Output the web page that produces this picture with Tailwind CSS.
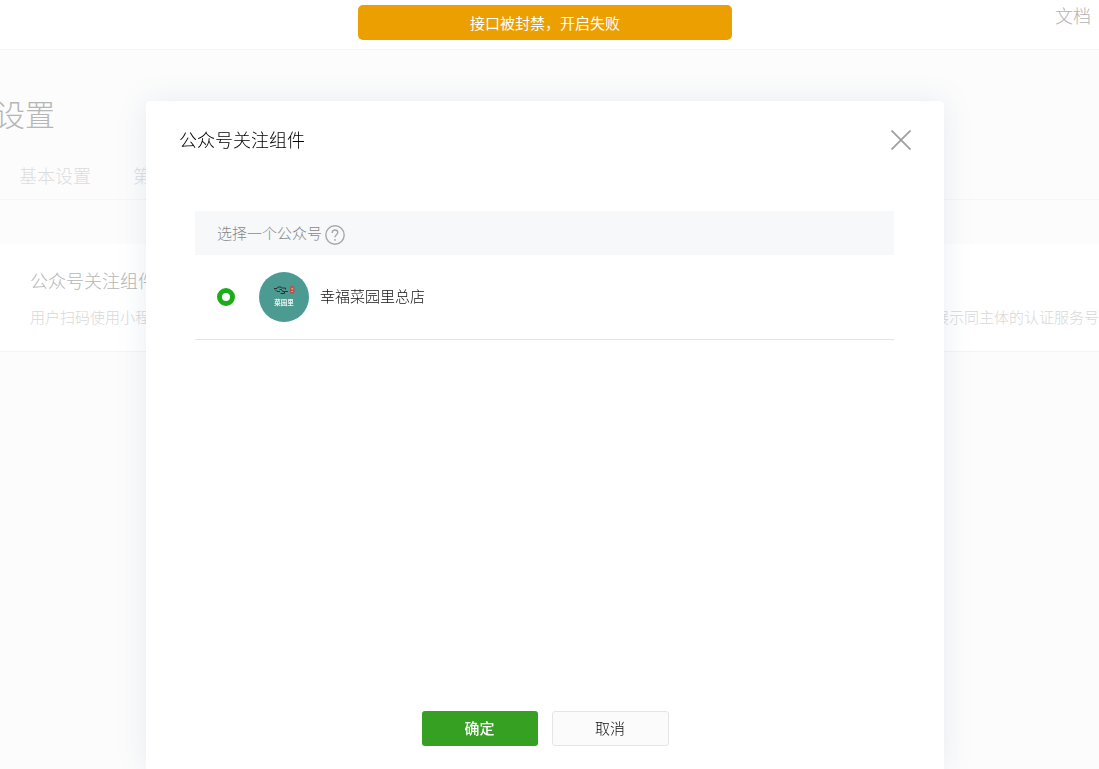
<!DOCTYPE html>
<html lang="zh-CN">
<head>
    <meta charset="UTF-8">
    <meta name="viewport" content="width=device-width, initial-scale=1.0">
    <title>设置</title>
    <script src="https://cdn.jsdelivr.net/npm/@tailwindcss/browser@4"></script>
</head>
<body class="min-h-screen overflow-hidden bg-[#fcfcfc] font-['Noto_Sans_CJK_SC',sans-serif] text-[15px] leading-6 font-light">
    <!-- Page behind the dialog -->
    <header class="flex h-[50px] justify-end border-b border-[#f5f5f5] bg-white px-2 pt-[3px]">
        <a href="#" class="text-lg leading-6 text-[#b4b4b4]">文档</a>
    </header>

    <main>
        <h1 class="-ml-[5px] pt-[43px] text-[30px] leading-10 text-[#b6b6b6]">设置</h1>
        <nav class="mt-[30px] flex h-[37px] gap-[42px] border-b border-[#f5f5f5] pl-[19px] text-lg leading-6 text-[#dcdcdc]">
            <a href="#">基本设置</a>
            <a href="#">第三方设置</a>
        </nav>

        <section class="mt-11 border-b border-[#f4f4f4] bg-white pt-6 pb-[22px] pl-[30px]">
            <h2 class="text-lg leading-6 text-[#b6b6b6]">公众号关注组件</h2>
            <p class="mt-[13px] flex justify-between whitespace-nowrap text-[#d8d8d8]">
                <span>用户扫码使用小程序时</span>
                <span>可展示同主体的认证服务号</span>
            </p>
        </section>
    </main>

    <!-- Dialog -->
    <div class="fixed inset-0 flex justify-center pt-[101px] pr-[9px]">
        <div role="dialog" aria-labelledby="dialogTitle" class="flex w-full max-w-[798px] flex-col rounded-t bg-white shadow-[0_1px_30px_rgba(95,125,165,0.14)]">
            <div class="flex h-[78px] items-center justify-between px-[33px]">
                <h3 id="dialogTitle" class="pb-0.5 text-lg leading-6 text-black">公众号关注组件</h3>
                <button type="button" aria-label="关闭">
                    <svg class="h-5 w-5" viewBox="0 0 20 20" fill="none" stroke="#a0a0a0" stroke-width="1.8">
                        <path d="M.5.5l19 19M19.5.5l-19 19"/>
                    </svg>
                </button>
            </div>

            <div class="flex-1 pt-8 pr-[50px] pl-[49px]">
                <table class="w-full">
                    <thead>
                        <tr class="h-11 bg-[#f6f8f9]">
                            <th class="pl-[22px] text-left font-light text-[#888]">
                                <div class="flex items-center">
                                    选择一个公众号
                                    <svg class="mt-1 ml-[3px] h-5 w-5" viewBox="0 0 20 20" fill="none" stroke="#a8a8a8" stroke-width="1.4">
                                        <circle cx="10" cy="10" r="9.2"/>
                                        <path d="M7.2 7.9c0-1.8 1.1-2.9 2.8-2.9s2.8 1 2.8 2.5c0 2.1-2.8 2.3-2.8 4.7" stroke-width="1.4"/>
                                        <circle cx="10" cy="14.9" r=".9" fill="#a8a8a8" stroke="none"/>
                                    </svg>
                                </div>
                            </th>
                        </tr>
                    </thead>
                    <tbody>
                        <tr class="h-[84px] border-b border-[#e4e4e4]">
                            <td class="pl-[22px]">
                                <label class="flex items-center text-[#111]">
                                    <input type="radio" name="account" checked class="h-[18px] w-[18px] appearance-none rounded-full border-5 border-[#1aad19] bg-white">
                                    <svg class="mr-[11px] ml-6 h-[50px] w-[50px]" viewBox="0 0 50 50">
                                        <circle cx="25" cy="25" r="25" fill="#4b9b92"/>
                                        <path d="M15 16.5h3l1-1.5h3l1 1.5M16 17.5l2 2h3M20.5 17.5h2l1 2h2v2h-4M23.5 16h3v1.5M25 19.5h4" fill="none" stroke="#263432" stroke-width="1"/>
                                        <rect x="31" y="14" width="4.4" height="7.5" rx="2" fill="#c4473e"/>
                                        <path d="M32 17h2.5M33.2 15.5v1.5M32.2 19.5h2" stroke="#edc9c2" stroke-width=".7"/>
                                        <text x="25" y="33" text-anchor="middle" font-size="6.5" font-weight="700" fill="#e8f1ee">菜园里</text>
                                    </svg>
                                    <span class="pb-0.5">幸福菜园里总店</span>
                                </label>
                            </td>
                        </tr>
                    </tbody>
                </table>
            </div>

            <div class="flex justify-center gap-[14px] pb-[23px]">
                <button type="button" class="h-[35px] w-[116px] rounded-[3px] bg-[#35a022] pb-0.5 font-medium text-white">确定</button>
                <button type="button" class="h-[35px] w-[117px] rounded-[3px] border border-[#e5e5e5] bg-[#fbfbfb] pb-0.5 text-[#111]">取消</button>
            </div>
        </div>
    </div>

    <!-- Warning message -->
    <div class="fixed inset-x-0 top-[5px] flex justify-center pr-[9px]">
        <div role="alert" class="flex h-[35px] w-[374px] items-center justify-center rounded-[5px] bg-[#eb9f00] font-normal text-white">接口被封禁，开启失败</div>
    </div>
</body>
</html>
